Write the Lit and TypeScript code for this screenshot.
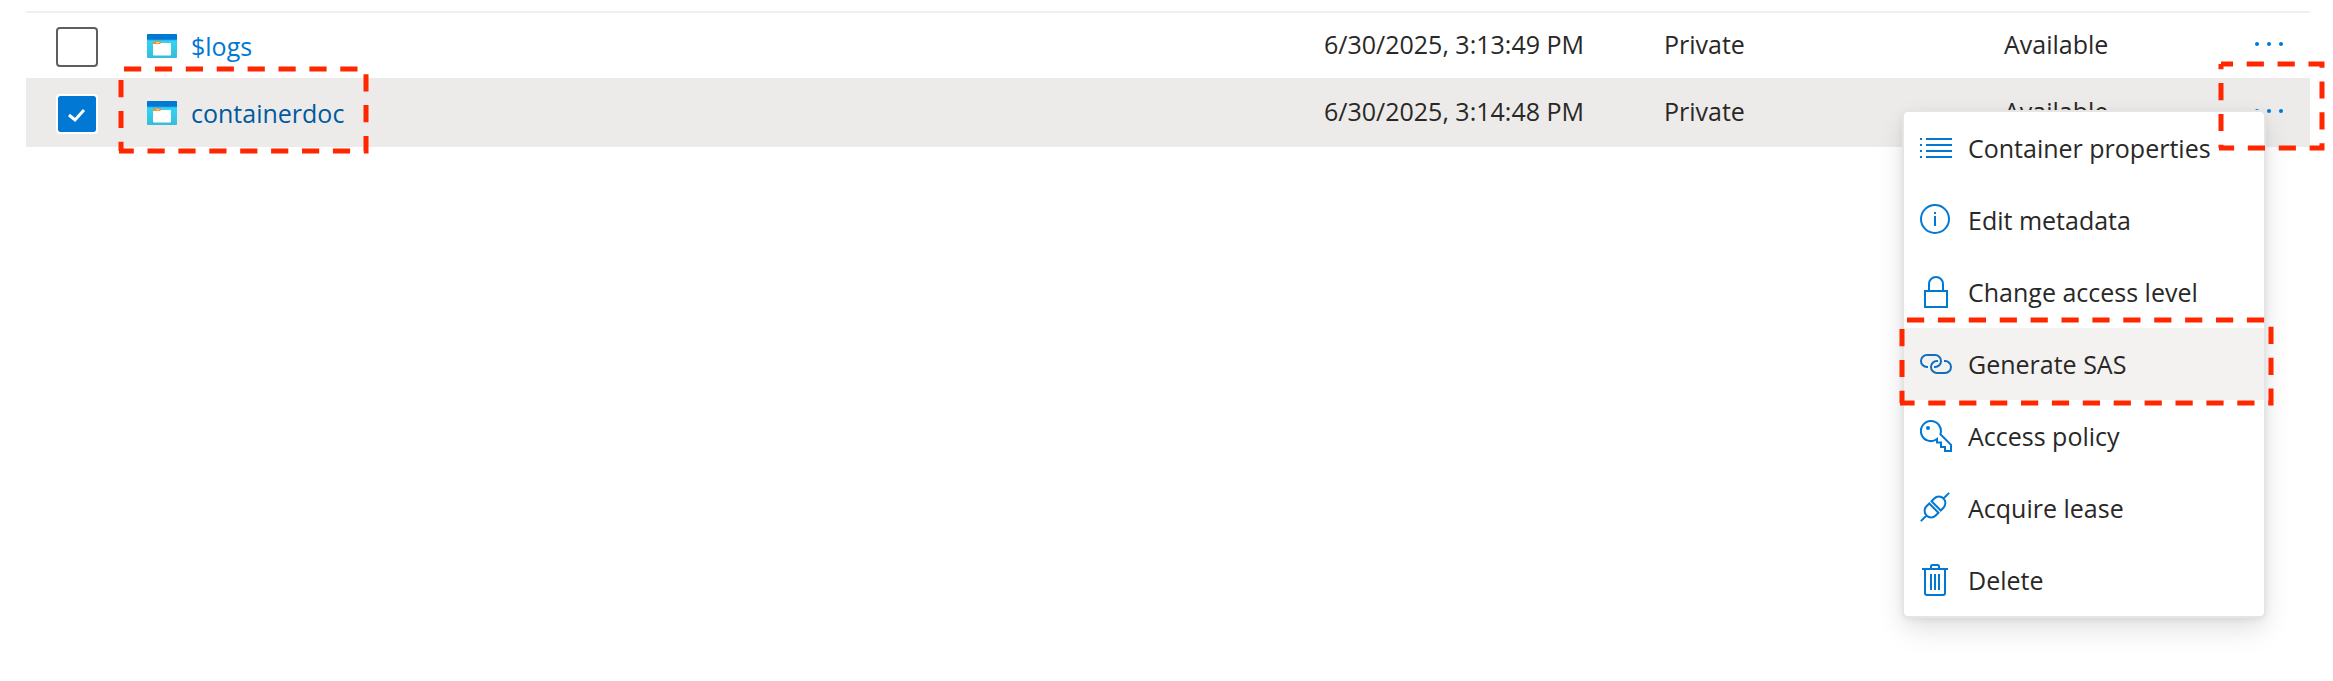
import { LitElement, html, css, svg, nothing } from "lit";
import type { SVGTemplateResult } from "lit";
import { customElement, property } from "lit/decorators.js";
import { classMap } from "lit/directives/class-map.js";

interface StorageContainer {
  name: string;
  modified: string;
  access: string;
  lease: string;
  selected: boolean;
}

interface MenuEntry {
  label: string;
  icon: SVGTemplateResult;
  active?: boolean;
}

const containers: StorageContainer[] = [
  { name: "$logs", modified: "6/30/2025, 3:13:49 PM", access: "Private", lease: "Available", selected: false },
  { name: "containerdoc", modified: "6/30/2025, 3:14:48 PM", access: "Private", lease: "Available", selected: true },
];

const menuEntries: MenuEntry[] = [
  {
    label: "Container properties",
    icon: svg`<path d="M0 7h2M0 13h2M0 19h2M0 25h2M6 7h26M6 13h26M6 19h26M6 25h26" />`,
  },
  {
    label: "Edit metadata",
    icon: svg`<circle cx="15" cy="15" r="14" /><path d="M15 8v2M15 12v10" />`,
  },
  {
    label: "Change access level",
    icon: svg`<path d="M5 15h22v16H5zM9 15V8a7 7 0 0 1 14 0v7" />`,
  },
  {
    label: "Generate SAS",
    icon: svg`<path d="M8 19H7A6 6 0 0 1 7 7h8a6 6 0 0 1 0 12h-1M24 13h1a6 6 0 0 1 0 12h-8a6 6 0 0 1 0-12h1" />`,
    active: true,
  },
  {
    label: "Access policy",
    icon: svg`<path d="M20.4 14.2A10 10 0 1 0 17 19v3.5h4V27h4v4h6v-6.2z" /><circle class="solid" cx="8" cy="8" r="2" />`,
  },
  {
    label: "Acquire lease",
    icon: svg`<g transform="translate(15 15) rotate(-45)"><path d="M1.6-6.5H5.5a6.5 6.5 0 0 1 0 13H1.6zM-1.6-6.5H-5.5a6.5 6.5 0 0 0 0 13H-1.6zM12 0h8M-12 0h-8" /></g>`,
  },
  {
    label: "Delete",
    icon: svg`<path d="M2 5h26M11 5V2.5A1.5 1.5 0 0 1 12.500 1h5A1.500 1.500 0 0 1 19 2.500V5M5 5v24a2 2 0 0 0 2 2h16a2 2 0 0 0 2-2V5M11 10v16M15 10v16M19 10v16" />`,
  },
];

@customElement("dashed-callout")
class DashedCallout extends LitElement {
  @property({ type: Number }) width = 100;
  @property({ type: Number }) height = 80;
  @property({ type: Number }) lead = 0;
  @property({ type: Number }) side = 0;

  static styles = css`
    :host {
      display: block;
      pointer-events: none;
    }
    svg {
      display: block;
      overflow: visible;
    }
    path {
      fill: none;
      stroke: #ff2600;
      stroke-width: 5;
      stroke-dasharray: 17.2 13.7;
    }
  `;

  render() {
    const { width: w, height: h } = this;
    return html`<svg width=${w} height=${h} aria-hidden="true">
      <path d="M0 0H${w}V${h}H-2" stroke-dashoffset=${this.lead} />
      <path d="M0 ${h}V0" stroke-dashoffset=${this.side} />
    </svg>`;
  }
}

@customElement("context-menu")
class ContextMenu extends LitElement {
  static styles = css`
    :host {
      display: block;
    }
    .menu {
      list-style: none;
      margin: 0;
      padding: 0;
      border-radius: 4px;
      background: #fff;
      box-shadow: 0 0 0 2px #e5e5e5, 0 12px 28px rgba(0, 0, 0, 0.13), 0 2px 8px rgba(0, 0, 0, 0.11);
    }
    .item {
      position: relative;
    }
    .action {
      display: flex;
      align-items: center;
      gap: 16px;
      width: 100%;
      height: 72px;
      padding: 0 16px;
      border: 0;
      background: transparent;
      color: #292827;
      font: inherit;
      text-align: left;
      white-space: nowrap;
    }
    .action.active {
      background: #f3f2f1;
    }
    .icon {
      flex: none;
      fill: none;
      stroke: #0078d4;
      stroke-width: 2;
    }
    .icon .solid {
      fill: #0078d4;
      stroke: none;
    }
    .active .icon {
      stroke: #106ebe;
    }
    .callout {
      position: absolute;
      top: -8px;
      left: -2px;
      z-index: 1;
    }
  `;

  render() {
    return html`<ul class="menu" role="menu">
      ${menuEntries.map(
        (entry) => html`<li class="item" role="none">
          <button class=${classMap({ action: true, active: !!entry.active })} role="menuitem" type="button">
            <svg class="icon" width="32" height="32" viewBox="0 0 32 32" aria-hidden="true">${entry.icon}</svg>
            <span>${entry.label}</span>
          </button>
          ${entry.active
            ? html`<dashed-callout class="callout" width="369" height="83" lead="-5" side="5"></dashed-callout>`
            : nothing}
        </li>`
      )}
    </ul>`;
  }
}

@customElement("app-root")
class AppRoot extends LitElement {
  static styles = css`
    :host {
      display: block;
      box-sizing: border-box;
      min-height: 100vh;
      padding: 11px 23px 0 26px;
      background: #fff;
      color: #292827;
      font-family: "Open Sans", "Noto Sans", sans-serif;
      font-size: 25px;
      line-height: 32px;
    }
    .grid {
      width: 100%;
      border-collapse: separate;
      border-spacing: 0;
      table-layout: fixed;
    }
    .cell {
      box-sizing: border-box;
      height: 67px;
      padding: 0 0 4px;
      border-top: 2px solid #f0f0f0;
      text-align: left;
      font-weight: 400;
      vertical-align: middle;
      white-space: nowrap;
    }
    .cell.tall {
      padding: 0;
    }
    .row.selected .cell {
      position: relative;
      height: 69px;
      border-color: #edebe9;
      border-bottom: 2px solid #edebe9;
      background: #edebe9;
    }
    .col-check {
      width: 121px;
    }
    .col-date,
    .col-access {
      width: 340px;
    }
    .col-lease {
      width: 250px;
    }
    .col-more {
      width: 56px;
    }
    .tick {
      display: grid;
      width: 42px;
      margin-left: 30px;
      padding-top: 2px;
    }
    .tick > * {
      grid-area: 1 / 1;
    }
    .box {
      appearance: none;
      box-sizing: border-box;
      width: 42px;
      height: 40px;
      margin: 0;
      border: 2px solid #605e5c;
      border-radius: 4px;
      background: #fff;
    }
    .box:checked {
      border-color: #fff;
      background: #0078d4;
      background-clip: padding-box;
    }
    .mark {
      fill: none;
      stroke: #fff;
      stroke-width: 3;
      pointer-events: none;
    }
    .name {
      display: flex;
      align-items: center;
      gap: 14px;
      color: #0078d4;
      text-decoration: none;
    }
    .selected .name {
      color: #005a9e;
    }
    .more {
      display: block;
      padding: 8px 0;
      border: 0;
      background: transparent;
    }
    .dots {
      display: block;
      fill: #0078d4;
    }
    .name-callout {
      position: absolute;
      top: -11px;
      left: -26px;
      z-index: 2;
    }
    .more-callout {
      position: absolute;
      top: -16px;
      right: -12px;
      z-index: 2;
    }
    .flyout {
      position: absolute;
      top: 32px;
      right: 46px;
      z-index: 1;
      width: 360px;
    }
  `;

  private renderRow(item: StorageContainer, index: number) {
    const gradient = `container-body-${index}`;
    return html`<tr class=${classMap({ row: true, selected: item.selected })}>
      <td class="cell tall">
        <label class="tick">
          <input class="box" type="checkbox" aria-label="Select ${item.name}" .checked=${item.selected} />
          ${item.selected
            ? html`<svg class="mark" width="42" height="40" aria-hidden="true"><path d="M13 21l6 5l9-10" /></svg>`
            : nothing}
        </label>
      </td>
      <th class="cell tall" scope="row">
        <a class="name" href="#">
          <svg width="30" height="24" viewBox="0 0 30 24" aria-hidden="true">
            <defs>
              <linearGradient id=${gradient} x1="0" y1="0" x2="0" y2="1">
                <stop offset="0.3" stop-color="#32d4f5" />
                <stop offset="1" stop-color="#37bcd8" />
              </linearGradient>
            </defs>
            <rect width="30" height="24" rx="1" fill="url(#${gradient})" />
            <path d="M0 6V1a1 1 0 0 1 1-1h28a1 1 0 0 1 1 1v5z" fill="#0078d4" />
            <path d="M0 5.300h30v1H0z" fill="#1b93d8" />
            <path d="M6 9h17a1 1 0 0 1 1 1v10.500a1 1 0 0 1-1 1H7a1 1 0 0 1-1-1z" fill="#fff" />
            <path d="M7 7.500h6.500a1 1 0 0 1 1 1L13 10H6V8.500a1 1 0 0 1 1-1z" fill="#f78d1e" />
            <rect x="9" y="8.300" width="3.500" height="1" rx="0.500" fill="#ffd9a8" />
          </svg>
          <span>${item.name}</span>
        </a>
        ${item.selected
          ? html`<dashed-callout class="name-callout" width="245" height="82" lead="-3" side="8"></dashed-callout>`
          : nothing}
      </th>
      <td class="cell">${item.modified}</td>
      <td class="cell">${item.access}</td>
      <td class="cell">${item.lease}</td>
      <td class="cell tall">
        <button class="more" type="button" aria-label="More actions for ${item.name}">
          <svg class="dots" width="30" height="10" aria-hidden="true">
            <circle cx="3" cy="3" r="2" /><circle cx="15" cy="3" r="2" /><circle cx="27" cy="3" r="2" />
          </svg>
        </button>
        ${item.selected
          ? html`<context-menu class="flyout"></context-menu>
              <dashed-callout class="more-callout" width="101" height="84" lead="5.2" side="14"></dashed-callout>`
          : nothing}
      </td>
    </tr>`;
  }

  render() {
    return html`<table class="grid">
      <colgroup>
        <col class="col-check" />
        <col />
        <col class="col-date" />
        <col class="col-access" />
        <col class="col-lease" />
        <col class="col-more" />
      </colgroup>
      <tbody>
        ${containers.map((item, index) => this.renderRow(item, index))}
      </tbody>
    </table>`;
  }
}
